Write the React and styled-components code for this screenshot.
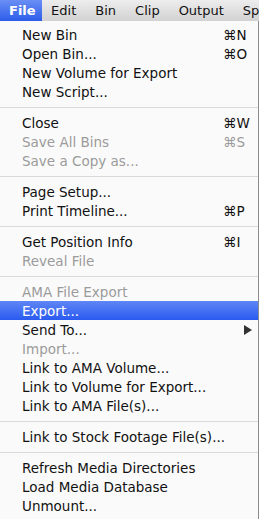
import React from 'react';
import styled, { createGlobalStyle } from 'styled-components';

const Global = createGlobalStyle`
  html, body {
    margin: 0;
    padding: 0;
    background: #6f6f6f;
  }
  body {
    width: 259px;
    height: 519px;
    overflow: hidden;
    font-family: "DejaVu Sans", "Liberation Sans", sans-serif;
    -webkit-font-smoothing: antialiased;
  }
`;

const Bar = styled.div`
  display: flex;
  align-items: stretch;
  height: 21px;
  background: linear-gradient(#ededed, #d2d2d2);
  white-space: nowrap;
  overflow: hidden;
`;

const BarItem = styled.div`
  display: flex;
  align-items: center;
  flex-shrink: 0;
  padding: ${p => (p.$active ? '0 6px 0 9px' : '0 9.5px')};
  font-size: 13px;
  color: ${p => (p.$active ? '#fff' : '#111')};
  font-weight: ${p => (p.$active ? 'bold' : 'normal')};
  background: ${p => (p.$active ? 'linear-gradient(#6a8ef5, #2d5de9)' : 'none')};
`;

const Menu = styled.div`
  width: 258px;
  padding: 4px 0;
  background: #fafafa;
  border-right: 1px solid #8c8c8c;
`;

const Row = styled.div`
  display: flex;
  align-items: center;
  height: 19px;
  padding-left: 22px;
  font-size: 13.5px;
  white-space: nowrap;
  color: ${p => (p.$active ? '#fff' : p.$disabled ? '#9b9b9b' : '#111')};
  background: ${p => (p.$active ? 'linear-gradient(#5f86f5, #2a5af0)' : 'none')};
`;

const Label = styled.span`
  flex: 1;
`;

const Keys = styled.span`
  width: 35px;
`;

const Arrow = styled.span`
  width: 0;
  height: 0;
  margin-right: 6px;
  border-top: 5px solid transparent;
  border-bottom: 5px solid transparent;
  border-left: 8px solid #333;
`;

const Sep = styled.div`
  height: 12px;
  display: flex;
  align-items: center;
  &::after {
    content: '';
    flex: 1;
    height: 1px;
    background: #dadada;
  }
`;

const groups = [
  [
    { label: 'New Bin', keys: '⌘N' },
    { label: 'Open Bin...', keys: '⌘O' },
    { label: 'New Volume for Export' },
    { label: 'New Script...' },
  ],
  [
    { label: 'Close', keys: '⌘W' },
    { label: 'Save All Bins', keys: '⌘S', disabled: true },
    { label: 'Save a Copy as...', disabled: true },
  ],
  [
    { label: 'Page Setup...' },
    { label: 'Print Timeline...', keys: '⌘P' },
  ],
  [
    { label: 'Get Position Info', keys: '⌘I' },
    { label: 'Reveal File', disabled: true },
  ],
  [
    { label: 'AMA File Export', disabled: true },
    { label: 'Export...', active: true },
    { label: 'Send To...', submenu: true },
    { label: 'Import...', disabled: true },
    { label: 'Link to AMA Volume...' },
    { label: 'Link to Volume for Export...' },
    { label: 'Link to AMA File(s)...' },
  ],
  [{ label: 'Link to Stock Footage File(s)...' }],
  [
    { label: 'Refresh Media Directories' },
    { label: 'Load Media Database' },
    { label: 'Unmount...' },
  ],
];

export default function App() {
  return (
    <>
      <Global />
      <Bar>
        <BarItem $active>File</BarItem>
        <BarItem>Edit</BarItem>
        <BarItem>Bin</BarItem>
        <BarItem>Clip</BarItem>
        <BarItem>Output</BarItem>
        <BarItem>Special</BarItem>
      </Bar>
      <Menu>
        {groups.map((items, gi) => (
          <React.Fragment key={gi}>
            {gi > 0 && <Sep />}
            {items.map(item => (
              <Row key={item.label} $disabled={item.disabled} $active={item.active}>
                <Label>{item.label}</Label>
                {item.keys && <Keys>{item.keys}</Keys>}
                {item.submenu && <Arrow />}
              </Row>
            ))}
          </React.Fragment>
        ))}
      </Menu>
    </>
  );
}
